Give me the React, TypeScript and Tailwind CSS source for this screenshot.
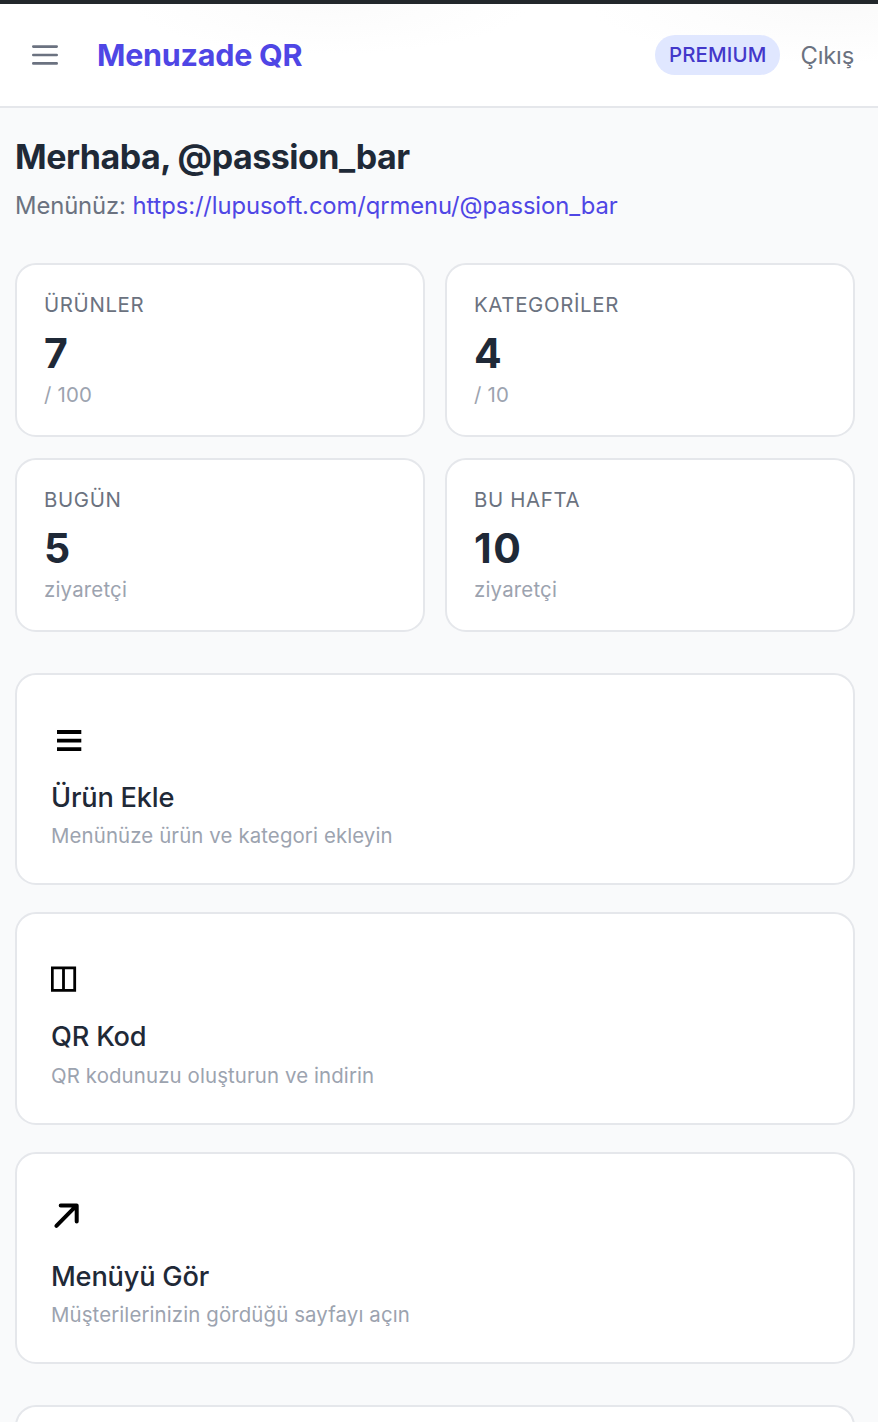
import React from 'react';

interface StatCardProps {
  label: string;
  value: string;
  note: string;
}

interface ActionCardProps {
  title: string;
  description: string;
  icon: React.ReactNode;
}

const stats: StatCardProps[] = [
  { label: 'ÜRÜNLER', value: '7', note: '/ 100' },
  { label: 'KATEGORİLER', value: '4', note: '/ 10' },
  { label: 'BUGÜN', value: '5', note: 'ziyaretçi' },
  { label: 'BU HAFTA', value: '10', note: 'ziyaretçi' },
];

const actions: ActionCardProps[] = [
  {
    title: 'Ürün Ekle',
    description: 'Menünüze ürün ve kategori ekleyin',
    icon: <path d="M6 22h24.3M6 30.6h24.3M6 39.1h24.3" strokeWidth="3.8" />,
  },
  {
    title: 'QR Kod',
    description: 'QR kodunuzu oluşturun ve indirin',
    icon: <path d="M1.3 18.9h22.4v22.4H1.3zM12.5 18.5v23" strokeWidth="2.8" />,
  },
  {
    title: 'Menüyü Gör',
    description: 'Müşterilerinizin gördüğü sayfayı açın',
    icon: (
      <path d="M9.7 16.4h16v16.2M25.4 16.7L5.4 36.8" strokeWidth="4" strokeLinecap="round" strokeLinejoin="round" />
    ),
  },
];

const StatCard: React.FC<StatCardProps> = ({ label, value, note }) => (
  <div className="h-[174px] bg-white border-2 border-[#e5e7eb] rounded-[21px] px-[27px] pt-[26px]">
    <p className="text-[20.4px] leading-7 tracking-[0.65px] text-[#6b7280]">{label}</p>
    <p className="mt-[10px] text-[41px] leading-[49px] font-bold tracking-[1.6px] text-[#1f2937]">{value}</p>
    <p className="mt-[3px] text-[20.4px] leading-7 tracking-[0.2px] text-[#9ca3af]">{note}</p>
  </div>
);

const ActionCard: React.FC<ActionCardProps> = ({ title, description, icon }) => (
  <a className="block h-[212.2px] bg-white border-2 border-[#e5e7eb] rounded-[21px] px-[34px] pt-[35px]">
    <svg className="block w-[42px] h-[66px]" viewBox="0 0 42 66" fill="none" stroke="#000">
      {icon}
    </svg>
    <h3 className="mt-[0.8px] text-[27.2px] leading-[42px] font-medium tracking-[-0.2px] text-[#1f2937]">{title}</h3>
    <p className="mt-[3.4px] text-[20.4px] leading-7 tracking-[0.12px] text-[#9ca3af]">{description}</p>
  </a>
);

const App: React.FC = () => {
  return (
    <div className="h-[1422px] overflow-hidden bg-[#f9fafb] font-['Inter',sans-serif]">
      <div className="h-1 bg-[#22272b]" />
      <header className="flex items-center h-[104px] pl-8 pr-6 bg-white border-b-2 border-[#e5e7eb] bg-[radial-gradient(ellipse_200px_50px_at_330px_0px,#fbfbfb,transparent),radial-gradient(ellipse_240px_60px_at_830px_0px,#fafafa,transparent)]">
        <svg className="w-[26px] h-[22px]" viewBox="0 0 26 22" fill="none" stroke="#6b7280" strokeWidth="2.6" strokeLinecap="round">
          <path d="M1.3 2.6h23.4M1.3 11h23.4M1.3 19.4h23.4" />
        </svg>
        <h1 className="ml-[39px] mb-[2px] text-[30.5px] leading-[49px] font-bold tracking-[-0.25px] text-[#4f46e5]">Menuzade QR</h1>
        <div className="ml-auto flex items-center">
          <span className="h-10 px-3.5 rounded-full bg-[#e0e7ff] text-[20.4px] leading-10 font-medium tracking-[0.15px] text-[#4338ca]">
            PREMIUM
          </span>
          <button className="ml-5 text-[23.8px] leading-[35px] tracking-[-0.2px] text-[#6b7280]">Çıkış</button>
        </div>
      </header>

      <main className="pl-[15px] pr-[23px] pt-[24px]">
        <h2 className="text-[34px] leading-[49px] font-bold tracking-[-0.5px] text-[#1f2937]">Merhaba, @passion_bar</h2>
        <p className="mt-[7px] text-[23.8px] leading-[35px] tracking-[-0.1px] text-[#6b7280]">
          Menünüz: <a className="text-[#4f46e5]">https://lupusoft.com/qrmenu/@passion_bar</a>
        </p>

        <div className="mt-[40px] grid grid-cols-2 gap-x-5 gap-y-[21px]">
          {stats.map((stat) => (
            <StatCard key={stat.label} {...stat} />
          ))}
        </div>

        <div className="mt-[41px] flex flex-col gap-[27.2px]">
          {actions.map((action) => (
            <ActionCard key={action.title} {...action} />
          ))}
        </div>

        <div className="mt-[41px] h-[212px] bg-white border-2 border-[#e5e7eb] rounded-[21px]" />
      </main>
    </div>
  );
};

export default App;
